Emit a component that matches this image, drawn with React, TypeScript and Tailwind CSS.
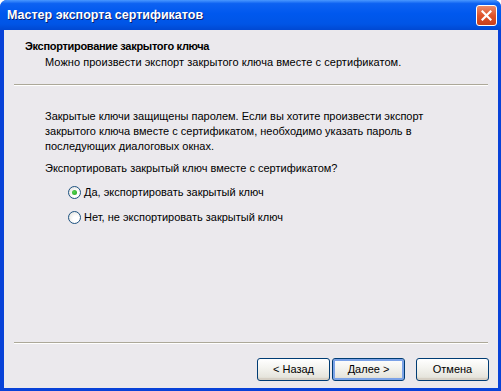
import React from 'react';

const font = { fontFamily: '"Liberation Sans", "DejaVu Sans", sans-serif' };

function Radio({ checked, label }: { checked?: boolean; label: string }) {
  return (
    <label className="flex items-center gap-[3px] h-[15px]">
      <span className="relative w-[13px] h-[13px] rounded-full border border-[#1c5180] bg-[radial-gradient(circle_at_65%_65%,#ffffff_30%,#dcdcd7_100%)] flex items-center justify-center">
        {checked && <span className="w-[5px] h-[5px] rounded-full bg-[radial-gradient(circle_at_40%_40%,#55d551,#21a121)]" />}
      </span>
      <span>{label}</span>
    </label>
  );
}

function Btn({ label, def }: { label: string; def?: boolean }) {
  return (
    <button
      className={
        'w-[73px] h-[23px] rounded-[3px] border border-[#003c74] text-black text-[11px] bg-[linear-gradient(to_bottom,#ffffff_0%,#f4f4f0_40%,#e6e5dd_85%,#d6d0c5_100%)] ' +
        (def ? 'shadow-[inset_0_0_0_2px_#7ba2e7]' : 'shadow-[inset_0_-2px_0_#d6d0c5]')
      }
    >
      {label}
    </button>
  );
}

export default function App() {
  return (
    <div className="w-[501px] h-[391px] bg-white" style={font}>
      <div className="w-full h-full flex flex-col rounded-t-[7px] overflow-hidden bg-[#0842d8]">
        <div className="h-[30px] shrink-0 flex items-center justify-between pl-[7px] pr-[4px] bg-[linear-gradient(to_bottom,#4a98ff_0%,#0d62f2_12%,#0058ee_45%,#0055e6_80%,#0048d2_100%)]">
          <span className="text-white font-bold text-[12.5px] [text-shadow:1px_1px_0_#0a1e6e]">
            Мастер экспорта сертификатов
          </span>
          <div className="w-[21px] h-[21px] rounded-[3px] border border-white bg-[linear-gradient(to_bottom,#e98b6c,#e0542a_50%,#c8401c)] flex items-center justify-center">
            <svg width="11" height="11" viewBox="0 0 11 11">
              <path d="M1.5 1.5 L9.5 9.5 M9.5 1.5 L1.5 9.5" stroke="white" strokeWidth="2.2" strokeLinecap="square" />
            </svg>
          </div>
        </div>
        <div className="flex-1 flex flex-col ml-[4px] mr-[3px] mb-[3px] bg-[#ebe9ed] text-[11px] text-black leading-[15px]">
          <div className="pt-[9px] pl-[21px]">
            <div className="font-bold tracking-[-0.3px]">Экспортирование закрытого ключа</div>
            <div className="pl-[20px] mt-[1px] tracking-[0.05px]">Можно произвести экспорт закрытого ключа вместе с сертификатом.</div>
          </div>
          <div className="mt-[14px] mx-[10px] h-[2px] border-t border-[#aca899] border-b border-b-white" />
          <div className="pl-[41px] pr-[40px] pt-[23px]">
            <p>
              Закрытые ключи защищены паролем. Если вы хотите произвести экспорт закрытого ключа вместе с сертификатом, необходимо указать пароль в последующих диалоговых окнах.
            </p>
            <p className="mt-[7px]">Экспортировать закрытый ключ вместе с сертификатом?</p>
            <div className="pl-[23px] mt-[9px] flex flex-col gap-[10px]">
              <Radio checked label="Да, экспортировать закрытый ключ" />
              <Radio label="Нет, не экспортировать закрытый ключ" />
            </div>
          </div>
          <div className="flex-1" />
          <div className="mx-[10px] h-[2px] border-t border-[#aca899] border-b border-b-white" />
          <div className="flex justify-end items-center pt-[14px] pb-[7px] pr-[9px]">
            <Btn label="< Назад" />
            <div className="w-[2px]" />
            <Btn label="Далее >" def />
            <div className="w-[11px]" />
            <Btn label="Отмена" />
          </div>
        </div>
      </div>
    </div>
  );
}
